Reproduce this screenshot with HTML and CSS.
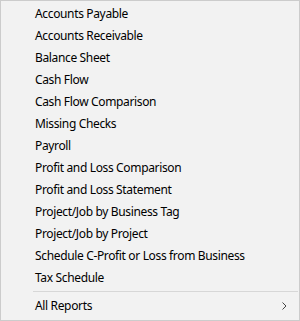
FILE: index.html
```html
<!DOCTYPE html>
<html>
<head>
<meta charset="utf-8">
<link rel="stylesheet" href="styles.css">
</head>
<body>
<div class="menu">
  <div class="item">Accounts Payable</div>
  <div class="item">Accounts Receivable</div>
  <div class="item">Balance Sheet</div>
  <div class="item">Cash Flow</div>
  <div class="item">Cash Flow Comparison</div>
  <div class="item">Missing Checks</div>
  <div class="item">Payroll</div>
  <div class="item">Profit and Loss Comparison</div>
  <div class="item">Profit and Loss Statement</div>
  <div class="item">Project/Job by Business Tag</div>
  <div class="item">Project/Job by Project</div>
  <div class="item">Schedule C-Profit or Loss from Business</div>
  <div class="item">Tax Schedule</div>
  <div class="sep"></div>
  <div class="item sub"><span>All Reports</span>
    <svg class="chev" width="5" height="8" viewBox="0 0 5 8"><path d="M0.5 0.5 L4 4 L0.5 7.5" fill="none" stroke="#444" stroke-width="1"/></svg>
  </div>
</div>
</body>
</html>
```
FILE: styles.css
```css
html, body { margin: 0; padding: 0; }
body { background: #f0f0f0; }
.menu {
  box-sizing: border-box;
  width: 300px;
  height: 321px;
  border: 1px solid #cccccc;
  background: #f2f2f2;
  padding: 2px 2px;
  font-family: "Noto Sans", "Open Sans", sans-serif;
  font-size: 12px;
  letter-spacing: -0.35px;
  color: #000;
}
.item {
  height: 22px;
  line-height: 22px;
  padding-left: 32px;
  white-space: nowrap;
}
.sub {
  display: flex;
  align-items: center;
  justify-content: space-between;
  padding-right: 10px;
}
.sep {
  height: 1px;
  background: #d7d7d7;
  margin: 2px 0 3px 30px;
  width: 265px;
}
```
